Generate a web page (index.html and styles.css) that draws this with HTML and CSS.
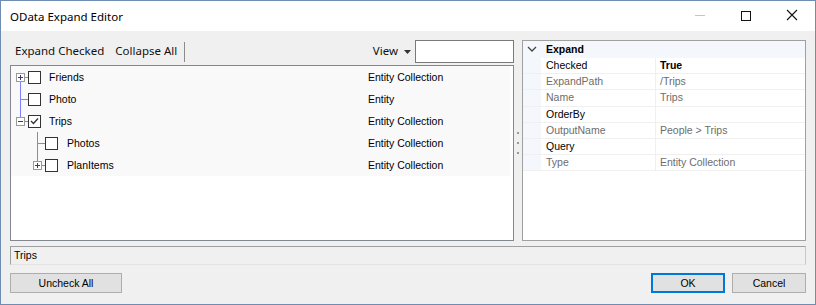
FILE: index.html
```html
<!DOCTYPE html>
<html lang="en">
<head>
    <meta charset="UTF-8">
    <title>OData Expand Editor</title>
    <link rel="stylesheet" href="styles.css">
</head>
<body>

    <div class="window">
        <div class="titlebar">
            <span class="title">OData Expand Editor</span>
            <div class="controls">
                <span class="ctl"><svg width="46" height="30"><line x1="18" y1="14.5" x2="28" y2="14.5" stroke="#c4c4c4"/></svg></span>
                <span class="ctl"><svg width="46" height="30"><rect x="18.5" y="10.5" width="9" height="9" fill="none" stroke="#111"/></svg></span>
                <span class="ctl"><svg width="46" height="30"><path d="M18 9 L28 19 M28 9 L18 19" stroke="#111" stroke-width="1.1"/></svg></span>
            </div>
        </div>

        <div class="client">
            <div class="main">
                <!-- tree on the left -->
                <div class="left-pane">
                    <div class="toolbar">
                        <span class="tool">Expand Checked</span>
                        <span class="tool">Collapse All</span>
                        <span class="tool-sep"></span>
                        <span class="spacer"></span>
                        <span class="tool view">View <svg width="7" height="4"><path d="M0 0 H7 L3.5 4 Z" fill="#333"/></svg></span>
                        <div class="search"></div>
                    </div>
                    <div class="tree">
                        <div class="tree-row">
                            <div class="node">
                                <svg width="38" height="22">
                                    <line x1="9.5" y1="16" x2="9.5" y2="22" stroke="#7f7fff"/>
                                    <line x1="14" y1="11.5" x2="17" y2="11.5" stroke="#7f7fff"/>
                                    <rect x="5.5" y="7.5" width="8" height="8" fill="#fff" stroke="#9a9a9a"/>
                                    <path d="M7 11.5 H12 M9.5 9 V14" stroke="#3a3a7a"/>
                                    <rect x="17.5" y="5.5" width="12" height="12" fill="#fff" stroke="#333"/>
                                </svg>
                                <span>Friends</span>
                            </div>
                            <span class="kind">Entity Collection</span>
                        </div>
                        <div class="tree-row">
                            <div class="node">
                                <svg width="38" height="22">
                                    <line x1="9.5" y1="0" x2="9.5" y2="22" stroke="#7f7fff"/>
                                    <line x1="9" y1="11.5" x2="17" y2="11.5" stroke="#7f7fff"/>
                                    <rect x="17.5" y="5.5" width="12" height="12" fill="#fff" stroke="#333"/>
                                </svg>
                                <span>Photo</span>
                            </div>
                            <span class="kind">Entity</span>
                        </div>
                        <div class="tree-row">
                            <div class="node">
                                <svg width="38" height="22">
                                    <line x1="9.5" y1="0" x2="9.5" y2="7" stroke="#7f7fff"/>
                                    <line x1="14" y1="11.5" x2="17" y2="11.5" stroke="#7f7fff"/>
                                    <rect x="5.5" y="7.5" width="8" height="8" fill="#fff" stroke="#9a9a9a"/>
                                    <path d="M7 11.5 H12" stroke="#3a3a7a"/>
                                    <rect x="17.5" y="5.5" width="12" height="12" fill="#fff" stroke="#333"/>
                                    <path d="M20 11 L22.5 13.5 L27 8.5" fill="none" stroke="#333" stroke-width="1.3"/>
                                </svg>
                                <span>Trips</span>
                            </div>
                            <span class="kind">Entity Collection</span>
                        </div>
                        <div class="tree-row">
                            <div class="node">
                                <svg width="56" height="22">
                                    <line x1="26.5" y1="0" x2="26.5" y2="22" stroke="#7f7fff"/>
                                    <line x1="26" y1="11.5" x2="34" y2="11.5" stroke="#7f7fff"/>
                                    <rect x="34.5" y="5.5" width="12" height="12" fill="#fff" stroke="#333"/>
                                </svg>
                                <span>Photos</span>
                            </div>
                            <span class="kind">Entity Collection</span>
                        </div>
                        <div class="tree-row">
                            <div class="node">
                                <svg width="56" height="22">
                                    <line x1="26.5" y1="0" x2="26.5" y2="7" stroke="#7f7fff"/>
                                    <line x1="31" y1="11.5" x2="34" y2="11.5" stroke="#7f7fff"/>
                                    <rect x="22.5" y="7.5" width="8" height="8" fill="#fff" stroke="#9a9a9a"/>
                                    <path d="M24 11.5 H29 M26.5 9 V14" stroke="#3a3a7a"/>
                                    <rect x="34.5" y="5.5" width="12" height="12" fill="#fff" stroke="#333"/>
                                </svg>
                                <span>PlanItems</span>
                            </div>
                            <span class="kind">Entity Collection</span>
                        </div>
                    </div>
                </div>

                <div class="splitter"><i></i><i></i><i></i></div>

                <!-- property grid -->
                <div class="props">
                    <div class="cat">
                        <span class="margin"><svg width="10" height="6"><path d="M1 1 L5 5 L9 1" fill="none" stroke="#444" stroke-width="1.3"/></svg></span>
                        <span class="cat-name">Expand</span>
                    </div>
                    <div class="prop-row">
                        <span class="margin"></span>
                        <span class="pname">Checked</span>
                        <span class="pval changed">True</span>
                    </div>
                    <div class="prop-row readonly">
                        <span class="margin"></span>
                        <span class="pname">ExpandPath</span>
                        <span class="pval">/Trips</span>
                    </div>
                    <div class="prop-row readonly">
                        <span class="margin"></span>
                        <span class="pname">Name</span>
                        <span class="pval">Trips</span>
                    </div>
                    <div class="prop-row">
                        <span class="margin"></span>
                        <span class="pname">OrderBy</span>
                        <span class="pval"></span>
                    </div>
                    <div class="prop-row readonly">
                        <span class="margin"></span>
                        <span class="pname">OutputName</span>
                        <span class="pval">People &gt; Trips</span>
                    </div>
                    <div class="prop-row">
                        <span class="margin"></span>
                        <span class="pname">Query</span>
                        <span class="pval"></span>
                    </div>
                    <div class="prop-row readonly">
                        <span class="margin"></span>
                        <span class="pname">Type</span>
                        <span class="pval">Entity Collection</span>
                    </div>
                </div>
            </div>

            <div class="status">Trips</div>

            <div class="buttons">
                <button class="btn wide">Uncheck All</button>
                <span class="spacer"></span>
                <button class="btn default">OK</button>
                <button class="btn">Cancel</button>
            </div>
        </div>
    </div>

</body>
</html>
```

FILE: styles.css
```css
body {
    margin: 0;
    font-family: 'Liberation Sans', Arial, sans-serif;
    background-color: #f0f0f0;
}
.window {
    width: 816px;
    height: 305px;
    box-sizing: border-box;
    border: 1px solid #6f8db3;
    display: flex;
    flex-direction: column;
}
.titlebar {
    height: 30px;
    background-color: #fff;
    display: flex;
    align-items: center;
    padding-left: 9px;
}
.title {
    font-family: 'Noto Sans', sans-serif;
    font-size: 11.5px;
    color: #000;
    flex: 1;
}
.controls {
    display: flex;
    align-self: stretch;
}
.ctl svg {
    display: block;
}
.client {
    flex: 1;
    background-color: #f0f0f0;
    padding: 9px 9px 11px 9px;
    display: flex;
    flex-direction: column;
}
.main {
    height: 201px;
    display: flex;
}
.left-pane {
    width: 504px;
    display: flex;
    flex-direction: column;
}
.toolbar {
    height: 25px;
    display: flex;
    align-items: flex-start;
    font-family: 'Noto Sans', sans-serif;
    font-size: 11.5px;
    color: #111;
}
.tool {
    padding: 3px 6px 0 5px;
    line-height: 16px;
}
.tool-sep {
    width: 1px;
    height: 20px;
    margin: 2px 0 0 1px;
    background-color: #8c8c8c;
}
.spacer {
    flex: 1;
}
.view {
    padding-right: 4px;
}
.view svg {
    margin-left: 3px;
    vertical-align: middle;
}
.search {
    width: 97px;
    height: 21px;
    background-color: #fff;
    border: 1px solid #7a7a7a;
}
.tree {
    flex: 1;
    background-color: #fff;
    border: 1px solid #828790;
    padding-right: 3px;
}
.tree-row {
    height: 22px;
    display: grid;
    grid-template-columns: 357px 1fr;
    align-items: center;
    background-color: #f9f9f9;
    font-size: 10.5px;
    color: #000;
}
.node {
    display: flex;
    align-items: center;
}
.node svg {
    display: block;
}
.splitter {
    width: 8px;
    display: flex;
    flex-direction: column;
    justify-content: center;
    align-items: center;
    gap: 8px;
    padding-top: 4px;
}
.splitter i {
    width: 2px;
    height: 2px;
    background-color: #9a9a9a;
}
.props {
    flex: 1;
    background-color: #fff;
    border: 1px solid #a0a0a0;
    font-size: 10.5px;
}
.cat, .prop-row {
    height: 15.2px;
    display: flex;
    border-bottom: 1px solid #f0f0f0;
}
.cat {
    height: 16px;
    background-color: #f4f7fc;
    border-bottom-color: #f4f7fc;
    align-items: center;
}
.margin {
    width: 18px;
    align-self: stretch;
    background-color: #f4f7fc;
    display: flex;
    align-items: center;
    justify-content: center;
}
.margin svg {
    display: block;
}
.cat-name {
    font-weight: bold;
    padding-left: 5px;
}
.pname {
    width: 109px;
    padding-left: 5px;
    border-right: 1px solid #f0f0f0;
    line-height: 15px;
    white-space: nowrap;
}
.pval {
    flex: 1;
    padding-left: 4px;
    line-height: 15px;
}
.changed {
    font-weight: bold;
}
.readonly {
    color: #6d6d6d;
}
.status {
    margin-top: 5px;
    height: 17px;
    border: 1px solid #a0a0a0;
    border-bottom-color: #e3e3e3;
    border-right-color: #c8c8c8;
    font-size: 10.5px;
    line-height: 17px;
    padding-left: 3px;
}
.buttons {
    margin-top: 8px;
    display: flex;
    gap: 7px;
}
.btn {
    height: 20px;
    width: 74px;
    padding: 0;
    background-color: #e1e1e1;
    border: 1px solid #adadad;
    font-family: 'Liberation Sans', Arial, sans-serif;
    font-size: 10.5px;
    color: #000;
}
.wide {
    width: 112px;
}
.default {
    border: 2px solid #0078d7;
}
```
